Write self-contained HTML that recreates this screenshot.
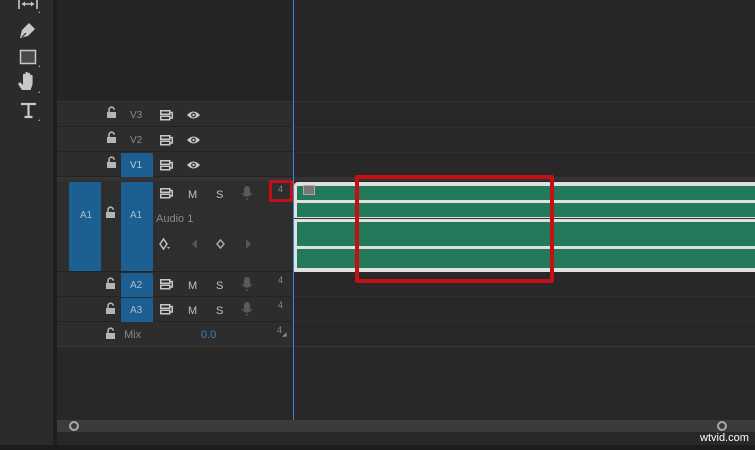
<!DOCTYPE html>
<html><head><meta charset="utf-8"><style>
*{margin:0;padding:0;box-sizing:border-box}
body{width:755px;height:450px;background:#232323;position:relative;overflow:hidden;font-family:"Liberation Sans",sans-serif}
.a{position:absolute}
.t{position:absolute;font-size:10px;color:#8a8a8a}
.row{position:absolute;left:57px;width:236px;background:#2d2d2d;border-bottom:1px solid #232323}
.blue{position:absolute;background:#1c6093}
</style></head><body>
<!-- toolbar -->
<div class="a" style="left:0;top:0;width:53px;height:450px;background:#2b2b2b"></div>
<div class="a" style="left:53px;top:0;width:4px;height:450px;background:#1f1f1f"></div>
<svg class="a" style="left:0;top:0" width="53" height="130">
<g fill="#c8c8c8" stroke="#c8c8c8">
<path d="M19 0v9M37 0v9M22 4h12" stroke-width="1.6" fill="none"/>
<path d="M22 4l3-2.5v5zM34 4l-3-2.5v5z" stroke="none"/>
<path d="M20 38l2-8 7-7 6 6-7 7z" stroke="none"/>
<path d="M22 37l4-4" stroke="#2b2b2b" stroke-width="1.2"/>
<rect x="20.5" y="50.5" width="15" height="13" fill="#4a4a4a" stroke-width="1.5"/>
<path d="M22 90l-4-6 2-2 3 3v-10a1.2 1.2 0 0 1 2.4 0v7-9a1.2 1.2 0 0 1 2.4 0v9-8a1.2 1.2 0 0 1 2.4 0v8-6a1.2 1.2 0 0 1 2.4 0v8l-2 6z" stroke="none"/>
<path d="M21 104h15M28.5 104v13M24.5 117h8" stroke-width="2.2" fill="none"/>
</g>
<g fill="#999"><path d="M38 13h2v-2zM38 67h2v-2zM38 93h2v-2zM38 121h2v-2z"/></g>
</svg>
<!-- timeline bg -->
<div class="a" style="left:57px;top:0;width:698px;height:445px;background:#282828"></div>
<div class="a" style="left:57px;top:0;width:236px;height:102px;background:#252525"></div>
<div class="a" style="left:293px;top:0;width:462px;height:102px;background:#262626"></div>
<div class="a" style="left:57px;top:101px;width:698px;height:1px;background:#343434"></div>
<div class="row" style="top:102px;height:25px"></div>
<div class="row" style="top:127px;height:25px"></div>
<div class="row" style="top:152px;height:25px"></div>
<div class="a" style="left:293px;top:127px;width:462px;height:1px;background:#303030"></div>
<div class="a" style="left:293px;top:152px;width:462px;height:1px;background:#303030"></div>
<div class="a" style="left:57px;top:177px;width:698px;height:4px;background:#333"></div>
<div class="blue" style="left:121px;top:153px;width:32px;height:24px"></div>
<div class="t" style="left:130px;top:110px">V3</div>
<div class="t" style="left:130px;top:135px">V2</div>
<div class="t" style="left:130px;top:160px;color:#b8c8d8">V1</div>
<div class="row" style="top:181px;height:91px;background:#2e2e2e"></div>
<div class="row" style="top:272px;height:25px"></div>
<div class="row" style="top:297px;height:25px"></div>
<div class="row" style="top:322px;height:25px"></div>
<div class="a" style="left:293px;top:296px;width:462px;height:1px;background:#303030"></div>
<div class="a" style="left:293px;top:321px;width:462px;height:1px;background:#303030"></div>
<div class="a" style="left:57px;top:346px;width:698px;height:1px;background:#3a3a3a"></div>
<div class="blue" style="left:69px;top:182px;width:32px;height:89px"></div>
<div class="blue" style="left:121px;top:182px;width:32px;height:89px"></div>
<div class="blue" style="left:121px;top:273px;width:32px;height:24px"></div>
<div class="blue" style="left:121px;top:298px;width:32px;height:24px"></div>
<div class="t" style="left:80px;top:210px;color:#a8bccc">A1</div>
<div class="t" style="left:130px;top:210px;color:#a8bccc">A1</div>
<div class="t" style="left:130px;top:280px;color:#a8bccc">A2</div>
<div class="t" style="left:130px;top:305px;color:#a8bccc">A3</div>
<div class="t" style="left:156px;top:213px;font-size:11px">Audio 1</div>
<div class="t" style="left:124px;top:329px;font-size:11px">Mix</div>
<div class="t" style="left:201px;top:329px;font-size:11px;color:#3d7fc4">0.0</div>
<div class="t" style="left:278px;top:184px;font-size:9px">4</div>
<div class="t" style="left:278px;top:275px;font-size:9px">4</div>
<div class="t" style="left:278px;top:300px;font-size:9px">4</div>
<div class="t" style="left:277px;top:325px;font-size:9px">4<sub style="font-size:6px">◢</sub></div>
<svg class="a" style="left:0;top:0" width="300" height="350">
<defs>
<g id="lk"><rect x="0" y="5" width="9" height="6" fill="#b5b5b5"/><path d="M2 5v-2.2a2.6 2.6 0 0 1 5.2 0" stroke="#b5b5b5" stroke-width="1.6" fill="none"/></g>
<g id="tg" fill="none" stroke="#c8c8c8" stroke-width="1.5"><rect x="0.75" y="0.75" width="9" height="3.5"/><rect x="0.75" y="6.25" width="9" height="3.5"/><path d="M9.75 2.5h2.5v5.5h-2.5"/></g>
<g id="eye"><path d="M0 5q6.5-7 13 0q-6.5 7-13 0z" fill="#c8c8c8"/><circle cx="6.5" cy="5" r="2.4" fill="#2d2d2d"/><circle cx="6.5" cy="5" r="1.2" fill="#c8c8c8"/></g>
<g id="mic" fill="#5a5a5a"><rect x="2" y="0" width="6" height="10" rx="3"/><path d="M0 7q5 6 10 0M5 12v2" stroke="#5a5a5a" stroke-width="1.3" fill="none"/></g>
</defs>
<use href="#lk" x="107" y="107"/><use href="#lk" x="107" y="132"/><use href="#lk" x="107" y="157"/>
<use href="#lk" x="106" y="207"/><use href="#lk" x="106" y="278"/><use href="#lk" x="106" y="303"/><use href="#lk" x="106" y="328"/>
<use href="#tg" x="160" y="110"/><use href="#tg" x="160" y="135"/><use href="#tg" x="160" y="160"/>
<use href="#tg" x="160" y="188"/><use href="#tg" x="160" y="279"/><use href="#tg" x="160" y="304"/>
<use href="#eye" x="187" y="110"/><use href="#eye" x="187" y="135"/><use href="#eye" x="187" y="160"/>
<use href="#mic" x="242" y="186"/><use href="#mic" x="242" y="277"/><use href="#mic" x="242" y="302"/>
<g fill="#c0c0c0" font-family="Liberation Sans" font-size="11">
<text x="188" y="198">M</text><text x="216" y="198">S</text>
<text x="188" y="289">M</text><text x="216" y="289">S</text>
<text x="188" y="314">M</text><text x="216" y="314">S</text>
</g>
<path d="M160 244l3.5-5 3.5 5-3.5 5z" fill="none" stroke="#c8c8c8" stroke-width="1.4"/><path d="M167 247h3l-1.5 2z" fill="#c0c0c0"/>
<path d="M197 249l-5-5 5-5z" fill="#555"/><path d="M217 244l3.5-4 3.5 4-3.5 4z" fill="none" stroke="#aaa" stroke-width="1.4"/><path d="M246 239l5 5-5 5z" fill="#555"/>
</svg>
<!-- clip -->
<div class="a" style="left:294px;top:182px;width:461px;height:90px;background:#e0e0e0;border-radius:4px 0 0 0"></div>
<div class="a" style="left:297px;top:186px;width:458px;height:14px;background:#237a5b"></div>
<div class="a" style="left:297px;top:203px;width:458px;height:14px;background:#237a5b"></div>
<div class="a" style="left:294px;top:218px;width:461px;height:1px;background:#333"></div>
<div class="a" style="left:297px;top:222px;width:458px;height:24px;background:#237a5b"></div>
<div class="a" style="left:297px;top:249px;width:458px;height:19px;background:#237a5b"></div>
<div class="a" style="left:303px;top:185px;width:12px;height:10px;background:#777;border:1px solid #aaa"></div>
<div class="a" style="left:293px;top:0;width:1px;height:420px;background:#3d84d6"></div>
<div class="a" style="left:355px;top:175px;width:199px;height:108px;border:4px solid #c40f14;border-radius:2px"></div>
<div class="a" style="left:269px;top:180px;width:24px;height:22px;border:3px solid #c40f14"></div>
<div class="a" style="left:57px;top:420px;width:698px;height:12px;background:#3b3b3b"></div>
<div class="a" style="left:69px;top:421px;width:10px;height:10px;border:2px solid #aaa;border-radius:50%"></div>
<div class="a" style="left:717px;top:421px;width:10px;height:10px;border:2px solid #aaa;border-radius:50%"></div>
<div class="a" style="left:0;top:445px;width:755px;height:5px;background:#1c1c1c"></div>
<div class="t" style="left:700px;top:432px;font-size:11px;color:#fff">wtvid.com</div>
</body></html>
